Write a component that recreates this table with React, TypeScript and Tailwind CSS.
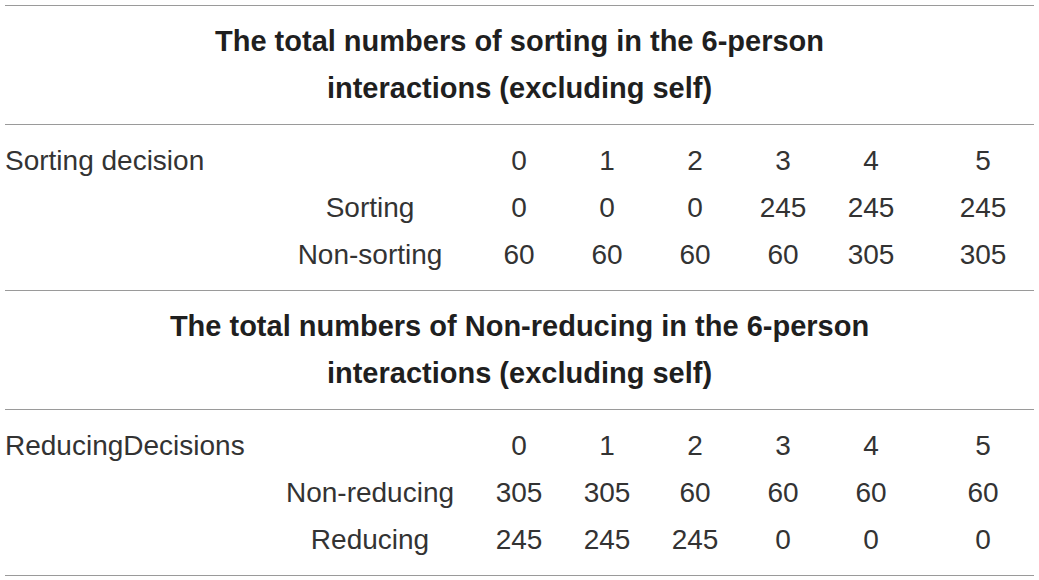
import React from 'react';

type Row = { label?: string; sub?: string; values: string[] };

interface SectionProps {
  title: string[];
  rows: Row[];
}

const cols = 'grid grid-cols-[260px_210px_88px_88px_88px_88px_88px_112px]';

const Section: React.FC<SectionProps> = ({ title, rows }) => {
  return (
    <div>
      <div className="border-b border-[#9a9a9a] pt-3 pb-3 text-center font-bold text-[29px] leading-[47px] text-[#1f1f1f]">
        {title.map((t) => (
          <div key={t}>{t}</div>
        ))}
      </div>
      <div className="border-b border-[#9a9a9a] pt-3 pb-3 text-[28px] leading-[47px] text-[#333333]">
        {rows.map((r, i) => (
          <div key={i} className={cols}>
            <div className="whitespace-nowrap">{r.label}</div>
            <div className="text-center whitespace-nowrap">{r.sub}</div>
            {r.values.map((v, j) => (
              <div key={j} className={j === 5 ? 'text-center pl-6' : 'text-center'}>
                {v}
              </div>
            ))}
          </div>
        ))}
      </div>
    </div>
  );
};

export default function App() {
  return (
    <div className="w-[1039px] h-[580px] bg-white px-[5px] pt-[5px] font-['Liberation_Sans',Arial,sans-serif]">
      <div className="border-t border-[#9a9a9a]">
        <Section
          title={['The total numbers of sorting in the 6-person', 'interactions (excluding self)']}
          rows={[
            { label: 'Sorting decision', values: ['0', '1', '2', '3', '4', '5'] },
            { sub: 'Sorting', values: ['0', '0', '0', '245', '245', '245'] },
            { sub: 'Non-sorting', values: ['60', '60', '60', '60', '305', '305'] },
          ]}
        />
        <Section
          title={['The total numbers of Non-reducing in the 6-person', 'interactions (excluding self)']}
          rows={[
            { label: 'ReducingDecisions', values: ['0', '1', '2', '3', '4', '5'] },
            { sub: 'Non-reducing', values: ['305', '305', '60', '60', '60', '60'] },
            { sub: 'Reducing', values: ['245', '245', '245', '0', '0', '0'] },
          ]}
        />
      </div>
    </div>
  );
}
